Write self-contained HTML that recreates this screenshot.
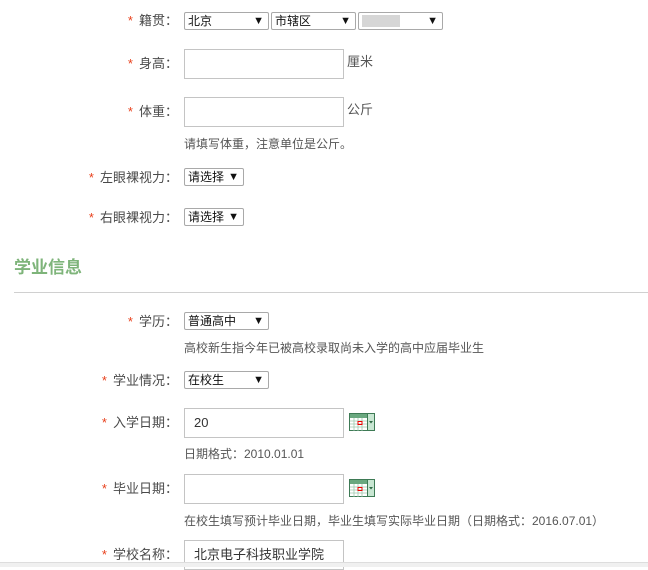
<!DOCTYPE html>
<html><head><meta charset="utf-8"><style>
body{margin:0;width:648px;height:566px;overflow:hidden;background:#fff;position:relative;font-family:"Liberation Sans","Noto Sans CJK SC",sans-serif;color:#555;}
.lb{position:absolute;right:470px;font-size:13px;line-height:16px;white-space:nowrap;color:#4a4a4a}
.lb i{font-style:normal;color:#e8401c;margin-right:6px}
.sel{position:absolute;border:1px solid #a9a9a9;border-radius:2px;height:16px;box-sizing:content-box;font-size:12px;line-height:16px;color:#111;padding-left:3px;background:#fff}
.sel:after{content:"▼";position:absolute;right:4px;top:0;font-size:11px;color:#111}
.inp{position:absolute;left:184px;width:158px;height:28px;border:1px solid #c4c4c4;font-size:13px;line-height:28px;color:#333;box-sizing:content-box}
.inp span{padding-left:9px}
.t{position:absolute;font-size:12px;line-height:14px;color:#555;white-space:nowrap}
.cal{position:absolute;left:349px;width:26px;height:18px}
</style></head><body>
<div class="lb" style="top:13px"><i>*</i>籍贯：</div>
<div class="sel" style="left:184px;top:12px;width:80px">北京</div>
<div class="sel" style="left:271px;top:12px;width:80px">市辖区</div>
<div class="sel" style="left:358px;top:12px;width:80px"><span style="display:inline-block;width:38px;height:12px;background:#bbb;opacity:.6;vertical-align:-2px"></span></div>

<div class="lb" style="top:56px"><i>*</i>身高：</div>
<div class="inp" style="top:49px"></div>
<div class="t" style="left:347px;top:55px;font-size:13px">厘米</div>

<div class="lb" style="top:104px"><i>*</i>体重：</div>
<div class="inp" style="top:97px"></div>
<div class="t" style="left:347px;top:103px;font-size:13px">公斤</div>
<div class="t" style="left:184px;top:137px">请填写体重，注意单位是公斤。</div>

<div class="lb" style="top:170px"><i>*</i>左眼裸视力：</div>
<div class="sel" style="left:184px;top:168px;width:55px">请选择</div>
<div class="lb" style="top:210px"><i>*</i>右眼裸视力：</div>
<div class="sel" style="left:184px;top:208px;width:55px">请选择</div>

<div style="position:absolute;left:14px;top:258px;font-size:17px;font-weight:bold;color:#7eb47a;line-height:20px">学业信息</div>
<div style="position:absolute;left:14px;right:0;top:292px;border-top:1px solid #d0d0d0"></div>

<div class="lb" style="top:314px"><i>*</i>学历：</div>
<div class="sel" style="left:184px;top:312px;width:80px">普通高中</div>
<div class="t" style="left:184px;top:341px">高校新生指今年已被高校录取尚未入学的高中应届毕业生</div>

<div class="lb" style="top:373px"><i>*</i>学业情况：</div>
<div class="sel" style="left:184px;top:371px;width:80px">在校生</div>

<div class="lb" style="top:415px"><i>*</i>入学日期：</div>
<div class="inp" style="top:408px"><span>20</span></div>
<svg class="cal" style="top:413px" viewBox="0 0 26 18"><rect x=".5" y=".5" width="18" height="17" fill="#fff" stroke="#3e7a55"/><rect x="1" y="1" width="17" height="4" fill="#6aa87f"/><g stroke="#9fc7ac" stroke-width=".8"><line x1="1" y1="8" x2="18" y2="8"/><line x1="1" y1="11" x2="18" y2="11"/><line x1="1" y1="14" x2="18" y2="14"/><line x1="5" y1="5" x2="5" y2="18"/><line x1="9" y1="5" x2="9" y2="18"/><line x1="13" y1="5" x2="13" y2="18"/></g><rect x="9" y="8.5" width="4" height="3" fill="none" stroke="#e00"/><rect x="18.5" y=".5" width="7" height="17" fill="#c8e6d2" stroke="#3e7a55"/><path d="M20 8h4l-2 2.5z" fill="#2f6a45"/></svg>
<div class="t" style="left:184px;top:447px">日期格式：2010.01.01</div>

<div class="lb" style="top:481px"><i>*</i>毕业日期：</div>
<div class="inp" style="top:474px"></div>
<svg class="cal" style="top:479px" viewBox="0 0 26 18"><rect x=".5" y=".5" width="18" height="17" fill="#fff" stroke="#3e7a55"/><rect x="1" y="1" width="17" height="4" fill="#6aa87f"/><g stroke="#9fc7ac" stroke-width=".8"><line x1="1" y1="8" x2="18" y2="8"/><line x1="1" y1="11" x2="18" y2="11"/><line x1="1" y1="14" x2="18" y2="14"/><line x1="5" y1="5" x2="5" y2="18"/><line x1="9" y1="5" x2="9" y2="18"/><line x1="13" y1="5" x2="13" y2="18"/></g><rect x="9" y="8.5" width="4" height="3" fill="none" stroke="#e00"/><rect x="18.5" y=".5" width="7" height="17" fill="#c8e6d2" stroke="#3e7a55"/><path d="M20 8h4l-2 2.5z" fill="#2f6a45"/></svg>
<div class="t" style="left:184px;top:514px">在校生填写预计毕业日期，毕业生填写实际毕业日期（日期格式：2016.07.01）</div>

<div class="lb" style="top:547px"><i>*</i>学校名称：</div>
<div class="inp" style="top:540px"><span>北京电子科技职业学院</span></div>
<div style="position:absolute;left:0;right:0;top:562px;height:4px;background:#f0f0f0;border-top:1px solid #ddd"></div>
</body></html>
